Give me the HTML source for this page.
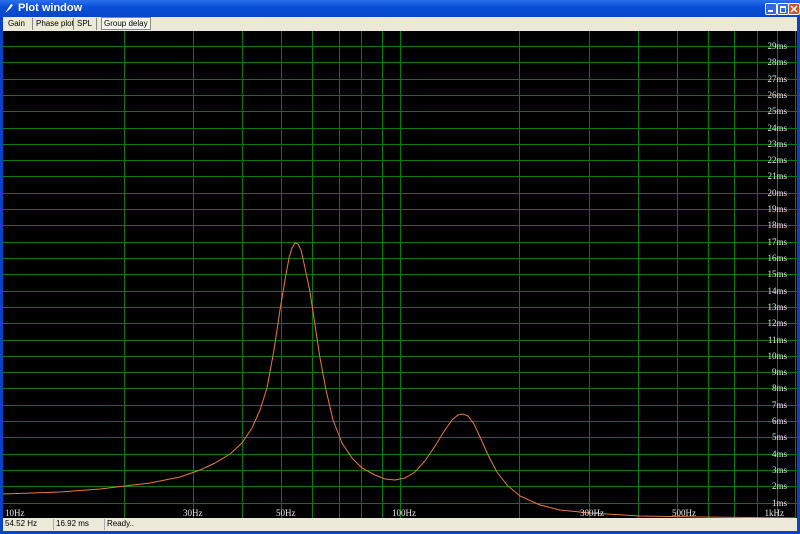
<!DOCTYPE html>
<html><head><style>
body{margin:0;width:800px;height:534px;overflow:hidden;background:#0842c8;font-family:"Liberation Sans",sans-serif;position:relative}
#tb{position:absolute;left:0;top:0;width:800px;height:17px;background:linear-gradient(#2a70ea,#0a50d8 40%,#0846c8);color:#fff;font-weight:bold;font-size:11px}
#tb span{position:absolute;left:18px;top:2px}
.btn{position:absolute;top:3px;width:10px;height:10px;border:1px solid #fff;border-radius:2px;background:#2b6ae8}
#tabs{position:absolute;left:3px;top:17px;width:794px;height:14px;background:#ece9d8;font-size:8px}
.t{position:absolute;top:2px;color:#000;white-space:nowrap}
.sep{position:absolute;top:1px;width:1px;height:12px;background:#888}
#plot{position:absolute;left:3px;top:31px;width:794px;height:487px;background:#000}
#sb{position:absolute;left:3px;top:518px;width:794px;height:13px;background:#ece9d8;font-size:8px}
#sb div{position:absolute;top:1px;height:11px;border-left:1px solid #aaa;padding-left:2px}
text{font-family:"Liberation Serif",serif;font-size:9px;fill:#e8e8e8}
</style></head><body>
<div id="tb"><svg style="position:absolute;left:3px;top:2px" width="12" height="12"><path d="M2 11 L6 5 L8 2 L10 3 L7 7 Z" fill="#fff"/></svg><span>Plot window</span>
<div class="btn" style="left:765px"><div style="position:absolute;left:2px;top:6px;width:5px;height:2px;background:#fff"></div></div>
<div class="btn" style="left:777px"><div style="position:absolute;left:2px;top:2px;width:4px;height:4px;border:1px solid #fff;border-top-width:2px"></div></div>
<div class="btn" style="left:788px;background:#d8502a"><svg width="10" height="10" style="position:absolute;left:0;top:0"><path d="M2 2 L8 8 M8 2 L2 8" stroke="#fff" stroke-width="1.5"/></svg></div></div>
<div id="tabs">
<span class="t" style="left:5px">Gain</span><div class="sep" style="left:29px"></div>
<span class="t" style="left:33px">Phase plot</span><div class="sep" style="left:70px"></div>
<span class="t" style="left:74px">SPL</span><div class="sep" style="left:93px"></div>
<span class="t" style="left:98px;top:0;border:1px solid #888;background:#f4f3ee;padding:1px 2px">Group delay</span>
</div>
<div id="plot">
<svg width="794" height="487" viewBox="3 31 794 487" style="position:absolute;left:0;top:0">
<g stroke="#0c780c" stroke-width="1" shape-rendering="crispEdges">
<line x1="3" x2="797" y1="46.5" y2="46.5"/><line x1="3" x2="797" y1="62.5" y2="62.5"/><line x1="3" x2="797" y1="79.5" y2="79.5"/><line x1="3" x2="797" y1="95.5" y2="95.5"/><line x1="3" x2="797" y1="111.5" y2="111.5"/><line x1="3" x2="797" y1="128.5" y2="128.5"/><line x1="3" x2="797" y1="144.5" y2="144.5"/><line x1="3" x2="797" y1="160.5" y2="160.5"/><line x1="3" x2="797" y1="176.5" y2="176.5"/><line x1="3" x2="797" y1="193.5" y2="193.5"/><line x1="3" x2="797" y1="209.5" y2="209.5"/><line x1="3" x2="797" y1="225.5" y2="225.5"/><line x1="3" x2="797" y1="242.5" y2="242.5"/><line x1="3" x2="797" y1="258.5" y2="258.5"/><line x1="3" x2="797" y1="274.5" y2="274.5"/><line x1="3" x2="797" y1="291.5" y2="291.5"/><line x1="3" x2="797" y1="307.5" y2="307.5"/><line x1="3" x2="797" y1="323.5" y2="323.5"/><line x1="3" x2="797" y1="340.5" y2="340.5"/><line x1="3" x2="797" y1="356.5" y2="356.5"/><line x1="3" x2="797" y1="372.5" y2="372.5"/><line x1="3" x2="797" y1="388.5" y2="388.5"/><line x1="3" x2="797" y1="405.5" y2="405.5"/><line x1="3" x2="797" y1="421.5" y2="421.5"/><line x1="3" x2="797" y1="437.5" y2="437.5"/><line x1="3" x2="797" y1="454.5" y2="454.5"/><line x1="3" x2="797" y1="470.5" y2="470.5"/><line x1="3" x2="797" y1="486.5" y2="486.5"/><line x1="3" x2="797" y1="503.5" y2="503.5"/>
<line y1="31" y2="518" x1="124.5" x2="124.5"/><line y1="31" y2="518" x1="193.5" x2="193.5"/><line y1="31" y2="518" x1="242.5" x2="242.5"/><line y1="31" y2="518" x1="281.5" x2="281.5"/><line y1="31" y2="518" x1="312.5" x2="312.5"/><line y1="31" y2="518" x1="339.5" x2="339.5"/><line y1="31" y2="518" x1="361.5" x2="361.5"/><line y1="31" y2="518" x1="382.5" x2="382.5"/><line y1="31" y2="518" x1="400.5" x2="400.5"/><line y1="31" y2="518" x1="519.5" x2="519.5"/><line y1="31" y2="518" x1="589.5" x2="589.5"/><line y1="31" y2="518" x1="638.5" x2="638.5"/><line y1="31" y2="518" x1="677.5" x2="677.5"/><line y1="31" y2="518" x1="708.5" x2="708.5"/><line y1="31" y2="518" x1="734.5" x2="734.5"/><line y1="31" y2="518" x1="757.5" x2="757.5"/><line y1="31" y2="518" x1="777.5" x2="777.5"/><line y1="31" y2="518" x1="795.5" x2="795.5"/>
</g>
<polyline fill="none" stroke="#e87a3a" stroke-width="1" points="3,494 60,492 100,489 150,483 180,477 200,470 215,463 230,454 242,443 252,428 260,410 267,388 274,350 280,310 285,280 289,258 292,248 295,243 298,244 301,250 305,268 310,292 315,325 320,358 326,390 333,420 342,443 352,458 362,468 375,475 385,479 395,480 405,478 415,472 425,461 435,446 445,430 452,420 458,415 463,414 468,416 474,424 480,437 488,455 497,472 507,485 520,496 540,505 560,510 590,513 640,516 700,517 795,518"/>
<g text-anchor="end">
<text x="787" y="49">29ms</text><text x="787" y="65">28ms</text><text x="787" y="82">27ms</text><text x="787" y="98">26ms</text><text x="787" y="114">25ms</text><text x="787" y="131">24ms</text><text x="787" y="147">23ms</text><text x="787" y="163">22ms</text><text x="787" y="179">21ms</text><text x="787" y="196">20ms</text><text x="787" y="212">19ms</text><text x="787" y="228">18ms</text><text x="787" y="245">17ms</text><text x="787" y="261">16ms</text><text x="787" y="277">15ms</text><text x="787" y="294">14ms</text><text x="787" y="310">13ms</text><text x="787" y="326">12ms</text><text x="787" y="343">11ms</text><text x="787" y="359">10ms</text><text x="787" y="375">9ms</text><text x="787" y="391">8ms</text><text x="787" y="408">7ms</text><text x="787" y="424">6ms</text><text x="787" y="440">5ms</text><text x="787" y="457">4ms</text><text x="787" y="473">3ms</text><text x="787" y="489">2ms</text><text x="787" y="506">1ms</text>
<text x="784" y="516">1kHz</text></g>
<text x="5" y="516">10Hz</text><text x="183" y="516">30Hz</text><text x="276" y="516">50Hz</text><text x="392" y="516">100Hz</text><text x="580" y="516">300Hz</text><text x="672" y="516">500Hz</text>
</svg></div>
<div id="sb"><div style="left:0;border:0;width:48px">54.52 Hz</div><div style="left:50px;width:48px">16.92 ms</div><div style="left:101px">Ready..</div></div>
</body></html>
